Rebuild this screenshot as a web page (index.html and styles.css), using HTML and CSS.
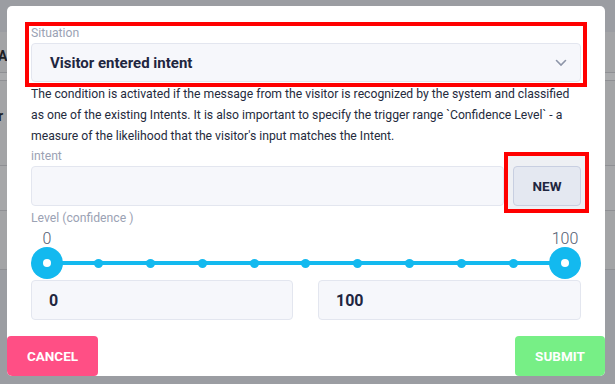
FILE: index.html
```html
<!DOCTYPE html>
<html lang="en">
<head>
  <meta charset="UTF-8">
  <meta name="viewport" content="width=device-width, initial-scale=1.0">
  <title>Condition - Situation</title>
  <link rel="stylesheet" href="styles.css">
</head>
<body>

  <!-- Page behind the dialog -->
  <div class="backdrop">
    <div class="bg-row bg-row-a"><span>A</span></div>
    <div class="bg-row bg-row-b"></div>
    <div class="bg-row bg-row-c"><span>r</span></div>
    <div class="bg-row bg-row-d"></div>
    <div class="bg-row bg-row-e"></div>
  </div>

  <!-- Dialog -->
  <div class="modal">
    <div class="modal-body">

      <div class="field highlight">
        <label class="field-label">Situation</label>
        <div class="select">
          <span>Visitor entered intent</span>
          <svg class="chevron" width="12" height="8" viewBox="0 0 12 8">
            <path d="M1.5 1.5 L6 6 L10.5 1.5" fill="none" stroke="#8d95a8" stroke-width="1.6" stroke-linecap="round"/>
          </svg>
        </div>
      </div>

      <p class="description">
        The condition is activated if the message from the visitor is recognized by the system and classified<br>
        as one of the existing Intents. It is also important to specify the trigger range `Confidence Level` - a<br>
        measure of the likelihood that the visitor's input matches the Intent.
      </p>

      <label class="field-label label-intent">intent</label>
      <div class="intent-row">
        <div class="input"></div>
        <div class="new-wrap highlight">
          <button class="btn-new">NEW</button>
        </div>
      </div>

      <label class="field-label label-level">Level (confidence )</label>
      <div class="slider">
        <div class="slider-labels">
          <span>0</span>
          <span>100</span>
        </div>
        <div class="slider-row">
          <div class="track">
            <span class="handle"></span>
            <span class="stop"></span>
            <span class="stop"></span>
            <span class="stop"></span>
            <span class="stop"></span>
            <span class="stop"></span>
            <span class="stop"></span>
            <span class="stop"></span>
            <span class="stop"></span>
            <span class="stop"></span>
            <span class="handle"></span>
          </div>
        </div>
      </div>

      <div class="range-inputs">
        <div class="input number">0</div>
        <div class="input number">100</div>
      </div>
    </div>

    <div class="modal-footer">
      <button class="btn btn-cancel">CANCEL</button>
      <button class="btn btn-submit">SUBMIT</button>
    </div>
  </div>

</body>
</html>
```

FILE: styles.css
```css
body {
  margin: 0;
  width: 615px;
  height: 384px;
  overflow: hidden;
  background-color: #9b9da2;
  font-family: Roboto, 'Liberation Sans', sans-serif;
  position: relative;
}

/* Page behind the dialog */
.backdrop {
  padding-top: 32px;
}

.bg-row {
  background-color: #a3a4a6;
  border-bottom: 1px solid #8f9094;
  color: #1d1f26;
  font-size: 14px;
  font-weight: bold;
}

.bg-row span {
  display: inline-block;
  margin-left: -2px;
}

.bg-row-a { height: 40px; line-height: 48px; }
.bg-row-b { height: 7px; background-color: #aaabad; }
.bg-row-c { height: 84px; line-height: 70px; }
.bg-row-d { height: 44px; background-color: #a6a7a9; }
.bg-row-e { height: 58px; }

/* Dialog */
.modal {
  position: absolute;
  left: 7px;
  top: 6px;
  width: 598px;
  height: 370px;
  background-color: #fff;
  border-radius: 5px;
  display: flex;
  flex-direction: column;
  justify-content: space-between;
  overflow: hidden;
}

.modal-body {
  padding: 20px 24px 0;
}

.highlight {
  outline: 4px solid #ff0000;
}

.field {
  margin: 0 -2px;
  padding: 0 2px 1px;
}

.field-label {
  display: block;
  font-size: 12.2px;
  line-height: 15px;
  color: #9ba2b4;
}

.select {
  margin-top: 2px;
  height: 37px;
  border: 1px solid #e3e6ef;
  border-radius: 4px;
  background-color: #f6f7fb;
  display: flex;
  align-items: center;
  justify-content: space-between;
  padding: 0 13px 0 18px;
  font-size: 15px;
  font-weight: bold;
  color: #1f2640;
}

.description {
  margin: 1px 0 0;
  font-size: 12.2px;
  line-height: 21px;
  color: #252b3d;
  white-space: nowrap;
}

.label-intent {
  margin-top: 2px;
}

.intent-row {
  display: flex;
  margin-top: 2px;
}

.input {
  flex: 1;
  height: 38px;
  border: 1px solid #e3e6ef;
  border-radius: 4px;
  background-color: #f6f7fb;
}

.new-wrap {
  margin: -10px -4px -3px 4px;
  padding: 10px 4px 3px 5px;
  background-color: #eef0f4;
}

.btn-new {
  width: 68px;
  height: 40px;
  border: 1px solid #c8cfe1;
  border-radius: 4px;
  background-color: #e4e8f1;
  font-family: inherit;
  font-size: 13.5px;
  font-weight: bold;
  color: #1f2640;
  cursor: pointer;
}

.label-level {
  margin-top: 5px;
}

/* Range slider */
.slider-labels {
  display: flex;
  justify-content: space-between;
  margin-top: 4px;
  font-size: 16px;
  font-weight: 300;
  line-height: 17px;
  color: #525b70;
}

.slider-labels span {
  width: 32px;
  text-align: center;
}

.slider-row {
  height: 32px;
  padding: 0 16px;
  display: flex;
  align-items: center;
}

.track {
  flex: 1;
  height: 4px;
  background-color: #13b9ef;
  display: flex;
  justify-content: space-between;
  align-items: center;
}

.stop {
  width: 9px;
  height: 9px;
  margin: 0 -4.5px;
  border-radius: 50%;
  background-color: #13b9ef;
}

.handle {
  width: 32px;
  height: 32px;
  margin: 0 -16px;
  border-radius: 50%;
  background-color: #13b9ef;
  display: flex;
  align-items: center;
  justify-content: center;
}

.handle::after {
  content: "";
  width: 8px;
  height: 8px;
  border-radius: 50%;
  background-color: #fff;
}

.range-inputs {
  display: grid;
  grid-template-columns: 262px 263px;
  column-gap: 25px;
  margin-top: 1px;
}

.number {
  display: flex;
  align-items: center;
  padding-left: 17px;
  font-size: 16px;
  font-weight: bold;
  color: #1f2640;
}

/* Footer buttons */
.modal-footer {
  display: flex;
  justify-content: space-between;
}

.btn {
  height: 40px;
  border: none;
  border-radius: 4px;
  font-family: inherit;
  font-size: 13.5px;
  font-weight: bold;
  color: #fff;
  cursor: pointer;
}

.btn-cancel {
  width: 91px;
  background-color: #ff4f85;
}

.btn-submit {
  width: 90px;
  background-color: #77ef86;
}
```
